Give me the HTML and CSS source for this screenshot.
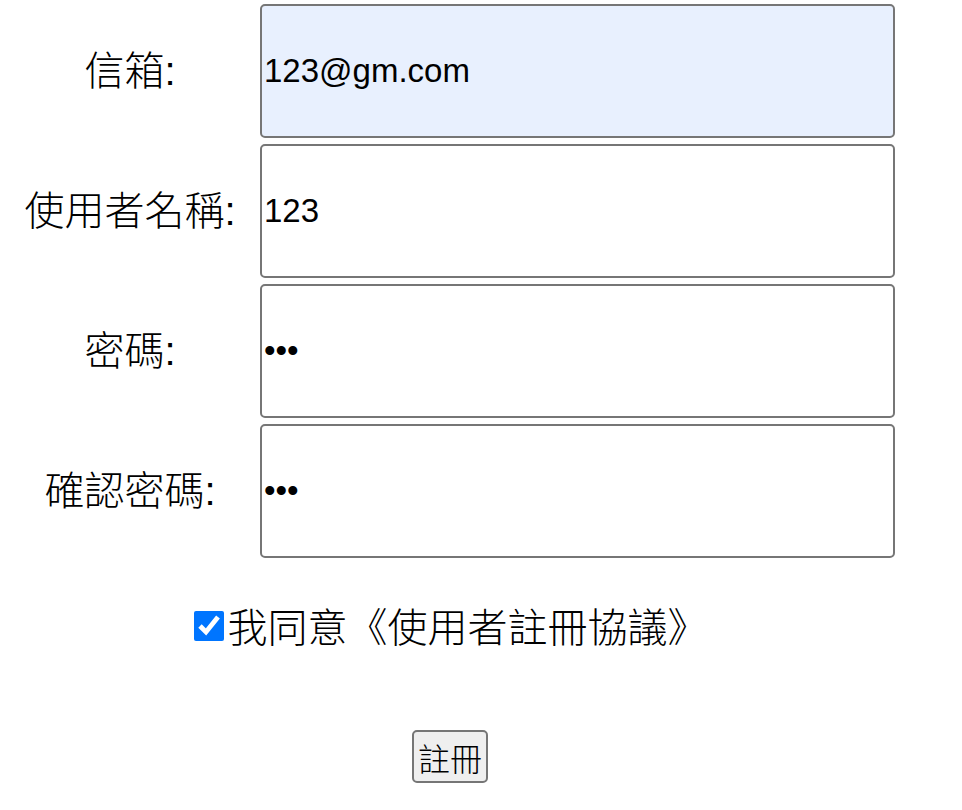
FILE: index.html
```html
<!DOCTYPE html>
<html lang="zh-Hant">
<head>
<meta charset="utf-8">
<title>註冊</title>
<link rel="stylesheet" href="styles.css">
</head>
<body>
<form class="form">
  <div class="fields">
    <label class="label" for="email">信箱:</label>
    <input class="field autofill" id="email" type="email" value="123@gm.com">
    <label class="label" for="user">使用者名稱:</label>
    <input class="field" id="user" type="text" value="123">
    <label class="label" for="pw">密碼:</label>
    <input class="field" id="pw" type="password" value="123">
    <label class="label" for="pw2">確認密碼:</label>
    <input class="field" id="pw2" type="password" value="123">
  </div>
  <div class="agree">
    <input class="check" id="agree" type="checkbox" checked>
    <label for="agree">我同意《使用者註冊協議》</label>
  </div>
  <div class="actions">
    <button class="submit" type="button">註冊</button>
  </div>
</form>
</body>
</html>
```
FILE: styles.css
```css
html, body {
  margin: 0;
  padding: 0;
  background: #ffffff;
}
body {
  font-family: "Liberation Sans", "Noto Sans CJK TC", sans-serif;
  color: #000000;
}
.form {
  width: 888px;
  margin-left: 8px;
  padding-top: 4px;
}
.fields {
  display: grid;
  grid-template-columns: 244px 635px;
  column-gap: 8px;
  row-gap: 6px;
  align-items: center;
}
.label {
  text-align: center;
  font-size: 40px;
  font-weight: 300;
  line-height: 48px;
}
.field {
  box-sizing: border-box;
  width: 635px;
  height: 134px;
  margin: 0;
  padding: 0 2px;
  border: 2px solid #767676;
  border-radius: 5px;
  background: #ffffff;
  font-family: "Liberation Sans", sans-serif;
  font-size: 33px;
  color: #000000;
}
.field.autofill {
  background: #e8f0fe;
}
.agree {
  display: flex;
  justify-content: center;
  align-items: center;
  margin-top: 46px;
  padding-right: 3px;
  height: 48px;
  font-size: 40px;
  font-weight: 300;
  line-height: 48px;
}
.check {
  width: 30px;
  height: 30px;
  margin: -4px 4px 0 0;
  accent-color: #0075ff;
}
.actions {
  display: flex;
  justify-content: center;
  margin-top: 78px;
  padding-right: 4px;
}
.submit {
  box-sizing: border-box;
  width: 76px;
  height: 53px;
  padding: 0;
  border: 2px solid #767676;
  border-radius: 5px;
  background: #efefef;
  font-family: "Noto Sans CJK TC", sans-serif;
  font-size: 32px;
  font-weight: 300;
  line-height: 1;
  color: #000000;
}
```
